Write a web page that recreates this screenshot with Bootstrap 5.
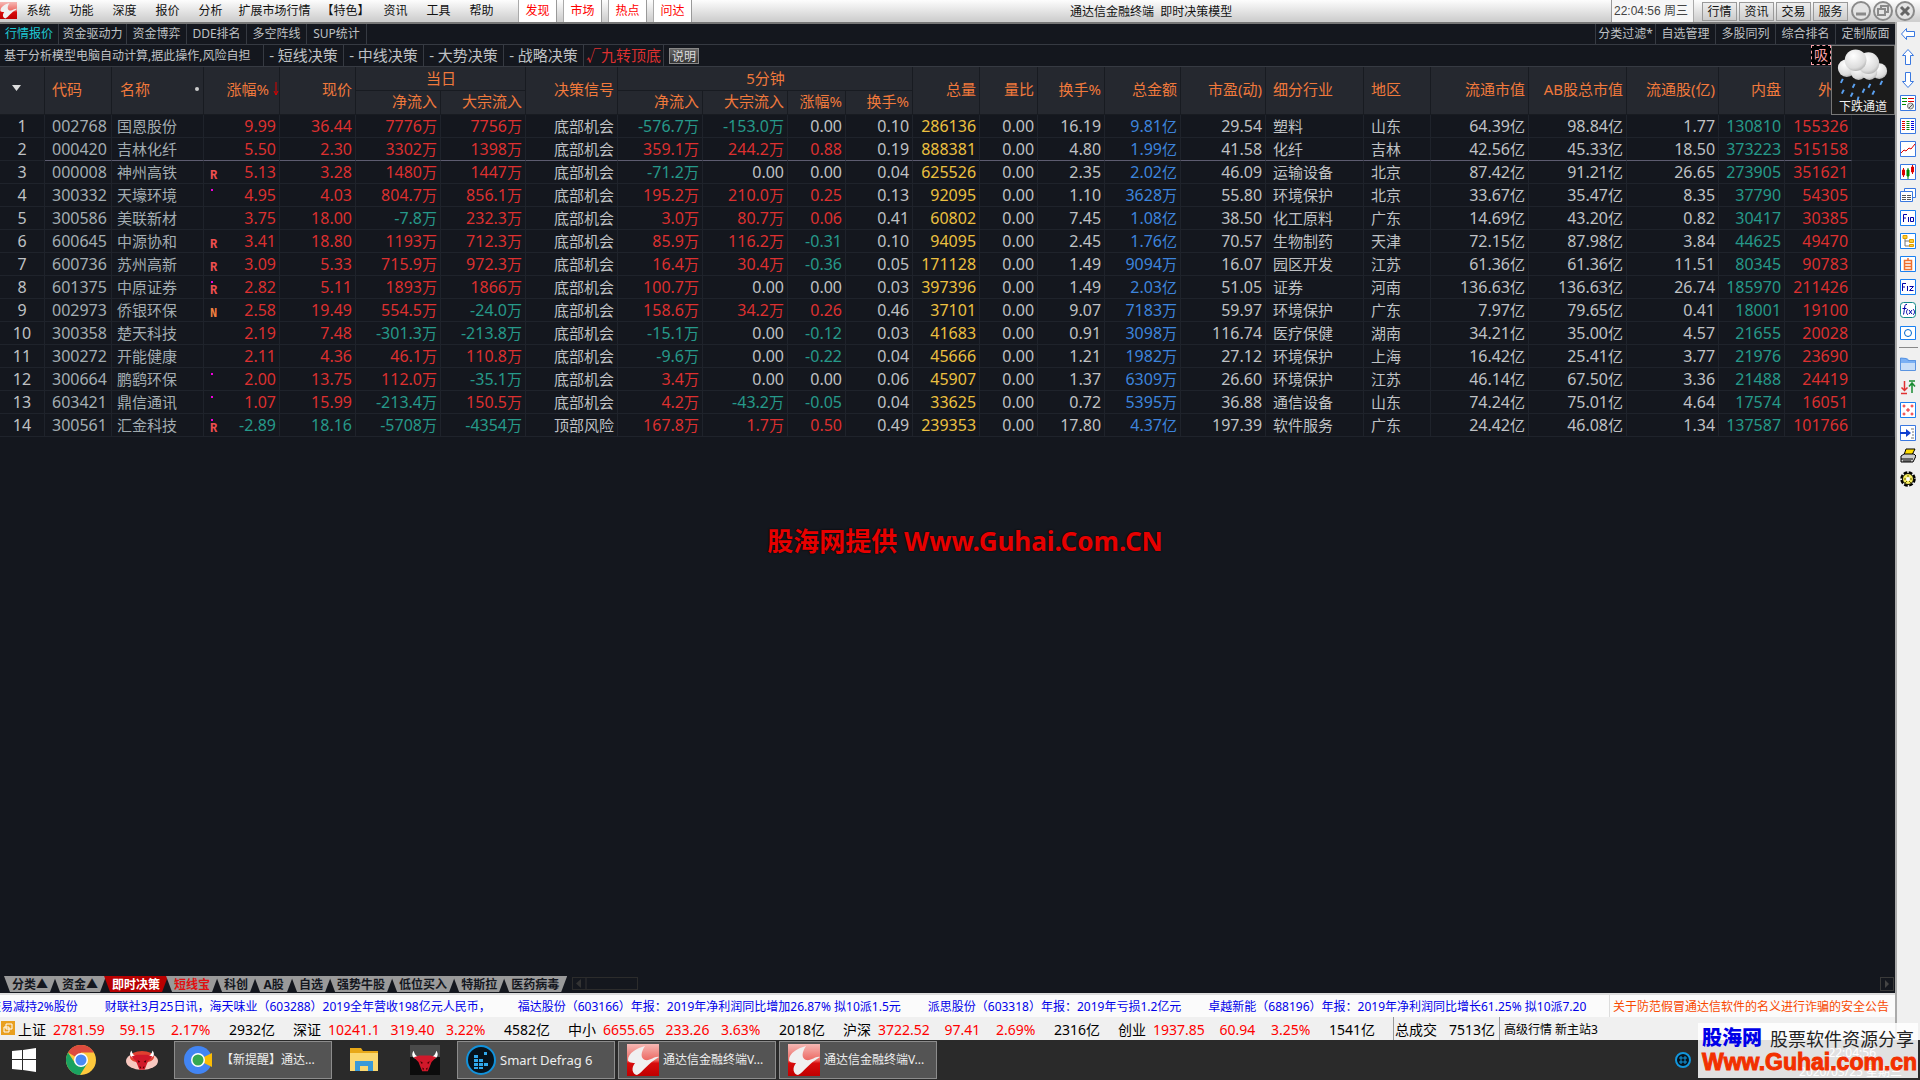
<!DOCTYPE html>
<html lang="zh-CN" data-bs-theme="dark">
<head>
<meta charset="utf-8">
<meta name="viewport" content="width=device-width, initial-scale=1">
<title>通达信金融终端 即时决策模型</title>
<link href="https://cdn.jsdelivr.net/npm/bootstrap@5.3.0/dist/css/bootstrap.min.css" rel="stylesheet">
<style>
  :root { --ink:#14171e; --line:#1f232b; --edge:#363a42; --head:#25282f; --or:#f0793c; --txt:#bfc1c4; }
  body { font-family:"Noto Sans","Noto Sans CJK SC",sans-serif; font-size:12px; line-height:18px; background:var(--ink); color:var(--txt); height:100vh; overflow:hidden; }
  button { font-family:inherit; border:0; background:none; color:inherit; padding:0; line-height:inherit; white-space:nowrap; }
  a { color:inherit; text-decoration:none; }
  svg { display:block; flex:none; }
  /* menu bar */
  .menubar { height:24px; background:linear-gradient(#fdfdfd,#cfcfcf 92%); border-bottom:2px solid #777; color:#111; }
  .menubar .mi { width:43px; text-align:center; white-space:nowrap; height:22px; line-height:22px; }
  .menubar .mi-l { width:85px; } .menubar .mi-m { width:57px; }
  .logo { margin-top:2px; }
  .hot { width:38px; height:22px; margin-right:7px; background:#fff; color:#f00; border-right:1px solid #999; box-shadow:-1px 0 0 #aaa; }
  .apptitle { left:1070px; top:0; line-height:23px; white-space:pre; }
  .clock { width:83px; background:#f6f6f6; border-left:1px solid #999; border-right:1px solid #aaa; color:#444; font:12px/23px "Liberation Sans","Noto Sans CJK SC",sans-serif; height:22px; padding-left:2px; margin-right:8px; white-space:nowrap; }
  .sysb { width:35px; height:19px; margin:2px 2px 0 0; border:1px solid #999; background:linear-gradient(#eee,#ccc); line-height:16px; }
  .winb { width:22px; height:22px; }
  /* tab rows */
  .tabrow { height:21px; border-bottom:1px solid var(--edge); }
  .tabrow button { width:60px; border-right:1px solid var(--edge); line-height:20px; }
  .tabrow .rt button { border-right:0; border-left:1px solid var(--edge); }
  .tabrow .on { color:#1fc8d4; width:59px; }
  .tabrow .wd { width:68px; }
  .modelrow { height:22px; border-bottom:1px solid var(--edge); }
  .modelrow .note { width:264px; padding-left:4px; border-right:1px solid var(--edge); line-height:21px; white-space:nowrap; }
  .modelrow .mb { width:80px; font-size:15px; line-height:19px; border-right:1px solid var(--edge); }
  .modelrow .help { width:30px; height:16px; margin:3px 0 0 5px; border:1px solid #888; background:linear-gradient(#666,#333); line-height:13px; color:#ddd; }
  /* quote grid */
  .quote { table-layout:fixed; width:100%; border-collapse:separate; border-spacing:0; font-size:16px; line-height:20px; }
  .quote th { background:var(--head); color:var(--or); font-weight:400; font-size:15px; line-height:18px; border-right:1px solid #181b21; border-bottom:1px solid #181b21; text-align:right; padding:0 3px 4px 4px; white-space:nowrap; overflow:hidden; vertical-align:middle; }
  .quote th.text-center { padding-bottom:2px; }
  .quote thead tr { height:24px; }
  .quote td { height:23px; padding:0 3px 1px 0; border-right:1px solid var(--line); border-bottom:1px solid var(--line); text-align:right; white-space:nowrap; line-height:20px; }
  .quote .l { text-align:left; padding-left:7px; }
  .quote .nm { padding-left:5px; }
  .quote .c { text-align:center; padding:0 0 1px; }
  .quote td.cj, .cj { font-size:15px; }
  .quote .pick td:not(:first-child):not(:last-child) { border-bottom-color:#5d5c70; }
  .quote tbody td.code, .quote tbody td.nm { color:#a3adb2; }
  .up { color:#dc3030; } .dn { color:#26998a; } .vol { color:#ecc040; } .amt { color:#3d84dc; }
  .flag { position:absolute; left:6px; top:9px; font:bold 12px/12px "Liberation Mono",monospace; color:#f05050; }
  .flag.n { color:#f08040; }
  .pip { position:absolute; left:7px; top:5px; width:2px; height:2px; background:#e0d; }
  .sortdot { width:4px; height:4px; border-radius:50%; background:#ccc; margin-right:1px; }
  .weather { right:0; top:21px; width:64px; height:70px; background:#1b1b1b; border:1px solid #777; color:#eee; z-index:3; }
  .xi { right:64px; top:21px; width:20px; height:20px; border:1px dashed #f9a0a8; background:#000; color:#f9a0a8; font-size:14px; line-height:18px; text-align:center; z-index:2; }
  .siteword { top:500px; left:0; right:0; padding-left:35px; text-align:center; font-size:26px; line-height:34px; font-weight:700; color:#e60000; text-shadow:0 0 2px #000; }
  /* tool strip */
  .strip { width:25px; background:#f0f0f0; border-left:2px solid #aaa; margin-top:-2px; z-index:4; }
  .strip button { height:23px; width:22px; display:flex; align-items:center; justify-content:center; }
  .strip hr { margin:3px 2px 4px; border-top:1px solid #888; opacity:1; }
  /* sheets */
  .sheets { height:17px; padding-left:4px; font-weight:700; }
  .sheets button { height:16px; min-width:39px; line-height:15px; padding:0 8px; margin-right:-2px; background:#9a9a9a; color:#14171e; font-weight:700; clip-path:polygon(0 0,100% 0,calc(100% - 6px) 100%,6px 100%); }
  .sheets .act { background:#b80000; color:#fff; } .sheets .hotx { color:#e01010; }
  .hbar { width:66px; height:13px; border:1px solid #2c2c2c; margin:1px 0 0 7px; }
  .hend { width:14px; height:14px; border:1px solid #3a3a3a; margin:1px 1px 0 0; }
  /* ticker + indices */
  .ticker { height:24px; background:#fbfbfb; border-top:2px solid #ddd; color:#0000e8; line-height:23px; white-space:nowrap; }
  .ticker .news { margin-left:-11px; gap:27px; }
  .ticker .notice { color:#f84800; width:286px; padding-left:3px; border-left:1px solid #ddd; }
  .indices { height:23px; background:#f0f0f0; color:#000; font-size:14px; line-height:25px; white-space:nowrap; }
  .coin { width:18px; }
  .ig { display:grid; grid-template-columns:35px 51px 67px 58px 64px; }
  .ig b, .ig span { font-weight:400; } .rd { color:#f00; }
  .tot { border-left:1px solid #999; border-right:1px solid #999; padding-left:1px; width:107px; }
  .srv { font-size:12px; }
  /* taskbar */
  .taskbar { height:40px; background:#2a2a2a; color:#eee; }
  .task { width:158px; height:38px; margin:1px 3px 0 0; padding-left:8px; display:flex; align-items:center; background:#545454; border:1px solid #8c8c8c; line-height:18px; }
  .launch { display:flex; align-items:center; justify-content:center; height:40px; }
  .w-start { width:48px; } .w-chrome { width:66px; } .w-bull { width:56px; margin-right:4px; } .w-files { width:58px; } .w-ox { width:64px; }
  .tray { padding-right:228px; }
  .sd { font-size:13px; }
  .brand { right:2px; bottom:2px; width:220px; height:55px; background:rgba(255,255,255,.86); z-index:9; }
  .brand .b1 { font-size:20px; line-height:22px; font-weight:900; color:#0000e8; }
  .brand .b2 { font-size:18px; line-height:22px; color:#222; font-family:"Noto Sans CJK SC",sans-serif; }
  .brand .b3 { font:bold 23px/26px "Liberation Sans",sans-serif; color:#f23000; -webkit-text-stroke:1px #f23000; }
  .ghost { color:#fff; font-size:12px; line-height:19px; white-space:nowrap; }
  .ghost .g1 { margin-top:-8px; padding-right:26px; }
</style>
<script src="https://cdn.jsdelivr.net/npm/bootstrap@5.3.0/dist/js/bootstrap.bundle.min.js"></script>
</head>
<body class="d-flex flex-column">
<svg width="0" height="0" class="position-absolute">
  <defs>
    <linearGradient id="gr" x1="0" y1="0" x2="0" y2="1"><stop offset="0" stop-color="#f6b8b4"/><stop offset=".5" stop-color="#ec6a64"/><stop offset=".6" stop-color="#d80c0c"/><stop offset="1" stop-color="#c00000"/></linearGradient>
    <radialGradient id="cl" cx=".4" cy=".3" r=".8"><stop offset="0" stop-color="#fff"/><stop offset=".7" stop-color="#dcdcdc"/><stop offset="1" stop-color="#a0a0a0"/></radialGradient>
    <symbol id="tdx" viewBox="0 0 32 32"><path fill="url(#gr)" d="M0 0h32v32H0z"/><path fill="#f0f0f0" d="M18 2C10 4 1 9 1 16c0 2 3 3 7 3-4 5-3 11 2 12 6-3 10-11 22-18-5-1-8 4-14 3-5-2-4-8 0-14z"/></symbol>
    <symbol id="bull" viewBox="0 0 32 24"><path fill="#fff" d="M4 1C0 6 4 11 11 10l1-2C8 8 5 6 4 1zM28 1c4 5 0 10-7 9l-1-2c4 0 7-2 8-7z"/><path fill="#d0182a" d="M10 6h12l6 2-5 5-2 5-2 5h-6l-2-5-2-5-5-5z"/><path fill="#400" d="M11 12l3 2-2 1zM21 12l-3 2 2 1zM13 19l2 1-1 2zM19 19l-2 1 1 2z"/></symbol>
  </defs>
</svg>

<header class="menubar d-flex position-relative flex-shrink-0">
  <svg width="17" height="17" class="logo"><use href="#tdx" width="17" height="17"/></svg>
  <nav class="d-flex">
    <a class="mi" href="#">系统</a><a class="mi" href="#">功能</a><a class="mi" href="#">深度</a><a class="mi" href="#">报价</a><a class="mi" href="#">分析</a><a class="mi mi-l" href="#">扩展市场行情</a><a class="mi mi-m" href="#">【特色】</a><a class="mi" href="#">资讯</a><a class="mi" href="#">工具</a><a class="mi" href="#">帮助</a>
  </nav>
  <div class="d-flex ms-3"><button class="hot">发现</button><button class="hot">市场</button><button class="hot">热点</button><button class="hot">问达</button></div>
  <div class="apptitle position-absolute">通达信金融终端  即时决策模型</div>
  <div class="d-flex ms-auto">
    <div class="clock">22:04:56 周三</div>
    <button class="sysb">行情</button><button class="sysb">资讯</button><button class="sysb">交易</button><button class="sysb">服务</button>
    <button class="winb" aria-label="最小化"><svg width="22" height="22" fill="none" stroke="#8a8a8a" stroke-width="2"><circle cx="11" cy="11" r="9" fill="#e4e4e4"/><path d="M6 14h10" stroke-width="3"/></svg></button>
    <button class="winb" aria-label="还原"><svg width="22" height="22" fill="none" stroke="#8a8a8a" stroke-width="2"><circle cx="11" cy="11" r="9" fill="#e4e4e4"/><path d="M9 9V6h7v6h-3M6 9h7v6H6z"/></svg></button>
    <button class="winb me-1" aria-label="关闭"><svg width="22" height="22" fill="none" stroke="#8a8a8a" stroke-width="2"><circle cx="11" cy="11" r="9" fill="#e4e4e4"/><path d="M7 7l8 8M15 7l-8 8" stroke="#666" stroke-width="3"/></svg></button>
  </div>
</header>

<div class="d-flex flex-grow-1" style="min-height:0">
  <main class="flex-grow-1 d-flex flex-column position-relative" style="min-width:0">
    <div class="tabrow d-flex justify-content-between flex-shrink-0">
      <div class="d-flex"><button class="on">行情报价</button><button class="wd">资金驱动力</button><button>资金博弈</button><button>DDE排名</button><button>多空阵线</button><button>SUP统计</button></div>
      <div class="d-flex rt"><button>分类过滤*</button><button>自选管理</button><button>多股同列</button><button>综合排名</button><button>定制版面</button></div>
    </div>
    <div class="modelrow d-flex flex-shrink-0">
      <div class="note">基于分析模型电脑自动计算,据此操作,风险自担</div>
      <button class="mb">- 短线决策</button><button class="mb">- 中线决策</button><button class="mb">- 大势决策</button><button class="mb">- 战略决策</button><button class="mb up">√九转顶底</button>
      <button class="help">说明</button>
    </div>
    <div class="xi position-absolute">吸</div>
    <div class="weather position-absolute text-center">
      <svg width="62" height="55" viewBox="0 0 63 55"><g fill="url(#cl)"><circle cx="15" cy="22" r="9"/><circle cx="48" cy="25" r="8"/><circle cx="27" cy="26" r="8"/><circle cx="38" cy="26" r="8"/><circle cx="37" cy="17" r="11"/><circle cx="24" cy="14" r="11"/></g><g stroke="#5aa0f0" stroke-width="2"><path d="M11 33l-2 4M23 38l-2 4M39 38l-2 4M51 35l-2 4M12 44l-2 4M21 47l-2 4M33 43l-2 4M43 45l-2 4M27 51l-1 4"/></g></svg>
      <div class="lh-1">下跌通道</div>
    </div>
    <table class="quote" id="quote">
      <colgroup id="cols"></colgroup>
      <thead>
        <tr><th rowspan="2"><svg width="9" height="7" class="ms-2"><path d="M0 0h9L4.500 6z" fill="#ddd"/></svg></th><th rowspan="2" class="l">代码</th><th rowspan="2"><div class="d-flex align-items-center justify-content-between ps-1">名称<i class="sortdot"></i></div></th><th rowspan="2" class="pe-0"><div class="d-flex align-items-center justify-content-end">涨幅%<svg width="6" height="14" class="ms-1"><path d="M3 0v13M1 9l2 4 2-4" fill="none" stroke="#d00"/></svg></div></th><th rowspan="2">现价</th><th colspan="2" class="text-center">当日</th><th rowspan="2">决策信号</th><th colspan="4" class="text-center">5分钟</th><th rowspan="2">总量</th><th rowspan="2">量比</th><th rowspan="2">换手%</th><th rowspan="2">总金额</th><th rowspan="2">市盈(动)</th><th rowspan="2" class="l">细分行业</th><th rowspan="2" class="l">地区</th><th rowspan="2">流通市值</th><th rowspan="2">AB股总市值</th><th rowspan="2">流通股(亿)</th><th rowspan="2">内盘</th><th rowspan="2">外盘</th><th rowspan="2"></th></tr>
        <tr><th>净流入</th><th>大宗流入</th><th>净流入</th><th>大宗流入</th><th>涨幅%</th><th>换手%</th></tr>
      </thead>
      <tbody id="rows"></tbody>
    </table>
    <div class="siteword position-absolute">股海网提供 Www.Guhai.Com.CN</div>
    <div class="sheets d-flex mt-auto flex-shrink-0">
      <button>分类▲</button><button>资金▲</button><button class="act">即时决策</button><button class="hotx">短线宝</button><button>科创</button><button>A股</button><button>自选</button><button>强势牛股</button><button>低位买入</button><button>特斯拉</button><button>医药病毒</button>
      <div class="hbar"><svg width="14" height="11"><path d="M8 1v9L3 5.500z" fill="#333"/><path d="M13 0v11" stroke="#333"/></svg></div>
      <div class="hend ms-auto"><svg width="12" height="12"><path d="M4 2v8l4-4z" fill="#444"/></svg></div>
    </div>
    <div class="ticker d-flex justify-content-between overflow-hidden flex-shrink-0">
      <div class="news d-flex"><span>交易减持2%股份</span><span>财联社3月25日讯，海天味业（603288）2019全年营收198亿元人民币，</span><span>福达股份（603166）年报：2019年净利润同比增加26.87% 拟10派1.5元</span><span>派思股份（603318）年报：2019年亏损1.2亿元</span><span>卓越新能（688196）年报：2019年净利润同比增长61.25% 拟10派7.20</span></div>
      <a class="notice" href="#">关于防范假冒通达信软件的名义进行诈骗的安全公告</a>
    </div>
    <div class="indices d-flex flex-shrink-0">
      <svg height="16" class="coin mt-1"><path d="M1 0h14v14H1z" fill="#e9a020"/><path d="M6 3h6v5H6zM4 6h5v5H4z" fill="none" stroke="#fff"/></svg>
      <div class="d-flex" id="idx"></div>
      <div class="tot d-flex justify-content-between"><span>总成交</span><span class="pe-1">7513亿</span></div>
      <span class="srv ps-1">高级行情 新主站3</span>
    </div>
  </main>

  <aside class="strip d-flex flex-column flex-shrink-0">
    <button aria-label="后退"><svg width="16" height="16" fill="#fff" stroke="#3a78e0"><path d="M1.500 8l5-5.500v3h8v5h-8v3z"/></svg></button>
    <button aria-label="上移"><svg width="16" height="16" fill="#fff" stroke="#3a78e0"><path d="M8 .5l5.500 6h-3v9h-5v-9h-3z"/></svg></button>
    <button aria-label="下移"><svg width="16" height="16" fill="#fff" stroke="#3a78e0"><path d="M8 15.500l5.500-6h-3v-9h-5v9h-3z"/></svg></button>
    <button aria-label="报价"><svg width="16" height="16"><path d="M.5.500h15v15H.5z" fill="#fff" stroke="#3a78e0"/><path d="M2 3.500h5M2 6.500h5M2 9.500h4" stroke="#080"/><path d="M8 3.500h6M8 6.500h6" stroke="#d00"/><circle cx="10.500" cy="11" r="3" fill="#ddd" stroke="#777"/><path d="M9 13l4-4" stroke="#555"/></svg></button>
    <button aria-label="列表"><svg width="16" height="16"><path d="M.5.500h15v15H.5z" fill="#fff" stroke="#3a78e0"/><path d="M2 3.500h3M2 5.500h3M2 7.500h3M2 9.500h3M2 11.500h3" stroke="#d00"/><path d="M6.500 3.500h3M6.500 5.500h3M6.500 7.500h3M6.500 9.500h3M6.500 11.500h3" stroke="#080"/><path d="M11 3.500h3M11 5.500h3M11 7.500h3M11 9.500h3M11 11.500h3" stroke="#00d"/></svg></button>
    <button aria-label="分时"><svg width="16" height="16"><path d="M.5.500h15v15H.5z" fill="#fff" stroke="#3a78e0"/><path d="M1 12l3-3 2 1 3-3 2 1 4-5" fill="none" stroke="#d00"/></svg></button>
    <button aria-label="K线"><svg width="16" height="16"><path d="M.5.500h15v15H.5z" fill="#fff" stroke="#3a78e0"/><path d="M2.500 6h2v5h-2zM11.500 3h2v5h-2zM3.500 4v9M12.500 1v9" fill="#d00" stroke="#d00"/><path d="M7 6h2v6H7zM8 4v11" fill="#080" stroke="#080"/></svg></button>
    <button aria-label="窗口"><svg width="16" height="16" fill="#fff" stroke="#3a78e0"><path d="M4.500 1.500h11v9h-11z"/><path d="M.5 4.500h12v10H.5z"/><path d="M2 8.500h4M2 10.500h4M2 12.500h4M7 8.500h4M7 10.500h4M7 12.500h4" stroke="#555"/></svg></button>
    <button aria-label="F10"><svg width="16" height="16" fill="#fff" stroke="#1a80f0"><path d="M.5.500h15v15H.5z"/><path d="M3.500 12V4.500H7M3.500 8H6M8.500 7v5M10.500 7.500h3v4h-3z" stroke="#00a" fill="none"/></svg></button>
    <button aria-label="树"><svg width="16" height="16" fill="#fff" stroke="#1a80f0"><path d="M.5.500h15v15H.5z"/><path d="M5 5v8h5M5 8h5" fill="none" stroke="#777"/><path d="M3 2.500h4v3H3zM9.500 6.500h4v3h-4zM9.500 11.500h4v2h-4z" fill="#fc3" stroke="#e0a000"/></svg></button>
    <button aria-label="自选"><svg width="16" height="16" fill="#fff" stroke="#1a80f0"><path d="M.5.500h15v15H.5z"/><path d="M4.500 4.500h7v9h-7zM4 7.500h8M4 10.500h8M8 2v2" stroke="#f07030" stroke-width="1.500" fill="none"/></svg></button>
    <button aria-label="F12"><svg width="16" height="16" fill="#fff" stroke="#1a80f0"><path d="M.5.500h15v15H.5z"/><path d="M2.500 12V4.500H6M2.500 8H5M7.500 7v5M9.500 7.500h4l-4 4h4" stroke="#00a" fill="none"/></svg></button>
    <button aria-label="公式"><svg width="16" height="16"><rect x=".5" y=".5" width="15" height="15" rx="3" fill="#fff" stroke="#188"/><path d="M7 2.500c-3-1-2 4-3.500 10M2.500 6.500h4M8 7c-2 2-2 4 0 6M13 7c2 2 2 4 0 6M9 8l3 4M12 8l-3 4" stroke="#00a" fill="none"/></svg></button>
    <button aria-label="圆"><svg width="16" height="16" fill="#fff" stroke="#1a80f0"><path d="M.5 1.500h15v13H.5z"/><circle cx="8" cy="8" r="3.500" stroke="#06c"/></svg></button>
    <hr>
    <button aria-label="文件夹"><svg width="16" height="16"><path d="M1 2h6l2 2h7v10H1z" fill="#7ab0f4"/><path d="M1 7h15v7H1z" fill="#c8def8"/><path d="M.5 2v12.500h15V4.500H8l-2-2z" fill="none" stroke="#5a94e0"/></svg></button>
    <button aria-label="排序"><svg width="16" height="16" fill="none" stroke-width="1.500"><path d="M4.500 2v9M1.500 8.500l3 3 3-3M1 14.500h6" stroke="#e03030"/><path d="M12 14V5M9 7.500l3-3.500 3 3.500M9 2h6" stroke="#188a30"/></svg></button>
    <button aria-label="十字"><svg width="16" height="16" fill="#fff" stroke="#1a80f0"><path d="M.5.500h15v15H.5z"/><path d="M6 8h4M8 6v4M2.500 4h3M4 2.500v3M10.500 4h3M12 2.500v3M2.500 12h3M4 10.500v3M10.500 12h3M12 10.500v3" stroke="#e22"/></svg></button>
    <button aria-label="跳转"><svg width="16" height="16"><path d="M.5.500h15v15H.5z" fill="#fff" stroke="#3a78e0"/><path d="M0 7h6V4l5 4-5 4V9H0z" fill="#1040d0"/><path d="M11 4h3M12 7h2M12 10h2M11 13h3" stroke="#777"/></svg></button>
    <button aria-label="打印"><svg width="16" height="16"><path d="M6 1h9l-3 6H4z" fill="#fd0" stroke="#000"/><path d="M1 8l3-2h10l2 2-3 6H1z" fill="#ccc" stroke="#000"/><path d="M1 11h12M3 13h8" stroke="#000"/></svg></button>
    <button aria-label="设置"><svg width="16" height="16"><circle cx="8" cy="8" r="6.500" fill="none" stroke="#000" stroke-width="2.500" stroke-dasharray="3.600 1.500"/><circle cx="8" cy="8" r="5.500" fill="#f4ec60" stroke="#000"/><path d="M8 4v3M4 8h3M9 8h3M5 12l2-2M11 12l-2-2" stroke="#665c00"/><circle cx="8" cy="8" r="2" fill="#fff"/></svg></button>
  </aside>
</div>

<footer class="taskbar d-flex position-relative flex-shrink-0">
  <button class="launch w-start" aria-label="开始"><svg width="24" height="24" fill="#fff"><path d="M0 3l10-1v9H0zM11 2l13-2v11H11zM0 12h10v10L0 21zM11 12h13v12l-13-2z"/></svg></button>
  <button class="launch w-chrome" aria-label="Chrome"><svg width="30" height="30" viewBox="0 0 30 30"><circle cx="15" cy="15" r="15" fill="#fdc83c"/><path d="M15 15L2 7.500A15 15 0 0 1 28 7.500H15z" fill="#dd4b3e"/><path d="M2 7.500A15 15 0 0 0 14 30l7.500-12L15 15l-6 3z" fill="#1aa260"/><circle cx="15" cy="15" r="7" fill="#fff"/><circle cx="15" cy="15" r="5.500" fill="#4a8af4"/></svg></button>
  <button class="launch w-bull" aria-label="牛"><svg width="34" height="24" viewBox="0 0 34 24"><ellipse cx="17" cy="13" rx="16" ry="9" fill="#f8c8c0"/><ellipse cx="17" cy="9" rx="12" ry="6" fill="#e04030"/><use href="#bull" x="3" y="1" width="28" height="22"/></svg></button>
  <button class="task"><svg width="30" height="30" class="me-2"><circle cx="15" cy="15" r="14" fill="#4285f4"/><path d="M15 15l14-7v14z" fill="#fbbc05"/><circle cx="15" cy="15" r="7" fill="#fff"/><circle cx="15" cy="15" r="5.500" fill="#34a853"/></svg>【新提醒】通达...</button>
  <button class="launch w-files" aria-label="资源管理器"><svg width="28" height="24"><path d="M0 0h11l2 3h15v20H0z" fill="#e8a818"/><path d="M0 5h28v18H0z" fill="#fbd870"/><path d="M5 23V13h18v10h-5v-5h-8v5z" fill="#3a9ad8"/></svg></button>
  <button class="launch w-ox" aria-label="牛市"><svg width="30" height="30"><path d="M0 0h30v30H0z" fill="#0c0c0c"/><path d="M0 0h30v12H0z" fill="#4a4a4a"/><use href="#bull" x="0" y="4" width="30" height="24"/></svg></button>
  <button class="task sd"><svg width="30" height="30" class="me-1"><circle cx="15" cy="15" r="14" fill="#06121c" stroke="#1292dc" stroke-width="2"/><path d="M8 10h4v3H8zM8 14h4v3H8zM13 14h4v3h-4zM8 18h4v3H8zM13 18h4v3h-4zM18 18h4v3h-4zM8 22h4v2H8zM13 22h4v2h-4zM18 7h3v3h-3z" fill="#30a8ec"/></svg>Smart Defrag 6</button>
  <button class="task"><svg width="32" height="32" class="me-1"><use href="#tdx"/></svg>通达信金融终端V...</button>
  <button class="task"><svg width="32" height="32" class="me-1"><use href="#tdx"/></svg>通达信金融终端V...</button>
  <div class="launch tray ms-auto"><svg width="18" height="18" fill="none" stroke="#1296dc" stroke-width="2"><circle cx="9" cy="9" r="7" fill="#06121c"/><path d="M6 6h2v2H6zM10 6h2v2h-2zM6 10h2v2H6zM10 10h2v2h-2z" stroke-width="1"/></svg></div>
</footer>

<div class="brand position-absolute">
  <div class="ghost position-absolute end-0 top-50 pe-3 text-end"><div class="g1">22:04:56</div>2020/03/25 星期三</div>
  <div class="position-relative d-flex justify-content-between px-1 pt-1"><span class="b1">股海网</span><span class="b2">股票软件资源分享</span></div>
  <div class="b3 position-relative ps-1">Www.Guhai.com.cn</div>
</div>

<script>
const widths = [45,67,92,76,76,85,85,92,85,85,58,67,67,58,67,76,85,98,67,98,98,92,66,67];
document.getElementById('cols').innerHTML = widths.map(w => `<col style="width:${w}px">`).join('') + '<col>';
// 代码 名称 标记 涨幅 现价 净流入 大宗 信号 | 5分钟×4 | 总量 换手 总金额 市盈 行业 地区 流通市值 总市值 流通股 内盘 外盘
const data = `002768 国恩股份 _ 9.99 36.44 7776万 7756万 底部机会 -576.7万 -153.0万 0.00 0.10 286136 16.19 9.81亿 29.54 塑料 山东 64.39亿 98.84亿 1.77 130810 155326
000420 吉林化纤 _ 5.50 2.30 3302万 1398万 底部机会 359.1万 244.2万 0.88 0.19 888381 4.80 1.99亿 41.58 化纤 吉林 42.56亿 45.33亿 18.50 373223 515158
000008 神州高铁 R 5.13 3.28 1480万 1447万 底部机会 -71.2万 0.00 0.00 0.04 625526 2.35 2.02亿 46.09 运输设备 北京 87.42亿 91.21亿 26.65 273905 351621
300332 天壕环境 . 4.95 4.03 804.7万 856.1万 底部机会 195.2万 210.0万 0.25 0.13 92095 1.10 3628万 55.80 环境保护 北京 33.67亿 35.47亿 8.35 37790 54305
300586 美联新材 _ 3.75 18.00 -7.8万 232.3万 底部机会 3.0万 80.7万 0.06 0.41 60802 7.45 1.08亿 38.50 化工原料 广东 14.69亿 43.20亿 0.82 30417 30385
600645 中源协和 R 3.41 18.80 1193万 712.3万 底部机会 85.9万 116.2万 -0.31 0.10 94095 2.45 1.76亿 70.57 生物制药 天津 72.15亿 87.98亿 3.84 44625 49470
600736 苏州高新 R 3.09 5.33 715.9万 972.3万 底部机会 16.4万 30.4万 -0.36 0.05 171128 1.49 9094万 16.07 园区开发 江苏 61.36亿 61.36亿 11.51 80345 90783
601375 中原证券 .R 2.82 5.11 1893万 1866万 底部机会 100.7万 0.00 0.00 0.03 397396 1.49 2.03亿 51.05 证券 河南 136.63亿 136.63亿 26.74 185970 211426
002973 侨银环保 N 2.58 19.49 554.5万 -24.0万 底部机会 158.6万 34.2万 0.26 0.46 37101 9.07 7183万 59.97 环境保护 广东 7.97亿 79.65亿 0.41 18001 19100
300358 楚天科技 _ 2.19 7.48 -301.3万 -213.8万 底部机会 -15.1万 0.00 -0.12 0.03 41683 0.91 3098万 116.74 医疗保健 湖南 34.21亿 35.00亿 4.57 21655 20028
300272 开能健康 _ 2.11 4.36 46.1万 110.8万 底部机会 -9.6万 0.00 -0.22 0.04 45666 1.21 1982万 27.12 环境保护 上海 16.42亿 25.41亿 3.77 21976 23690
300664 鹏鹞环保 . 2.00 13.75 112.0万 -35.1万 底部机会 3.4万 0.00 0.00 0.06 45907 1.37 6309万 26.60 环境保护 江苏 46.14亿 67.50亿 3.36 21488 24419
603421 鼎信通讯 . 1.07 15.99 -213.4万 150.5万 底部机会 4.2万 -43.2万 -0.05 0.04 33625 0.72 5395万 36.88 通信设备 山东 74.24亿 75.01亿 4.64 17574 16051
300561 汇金科技 .R -2.89 18.16 -5708万 -4354万 顶部风险 167.8万 1.7万 0.50 0.49 239353 17.80 4.37亿 197.39 软件服务 广东 24.42亿 46.08亿 1.34 137587 101766`.split('\n').map(r => r.split(' '));
const unit = s => s.replace(/[万亿]/, '<span class="cj">$&</span>');
const tone = s => parseFloat(s) > 0 ? 'up' : parseFloat(s) < 0 ? 'dn' : '';
const td = (s, cls = '') => `<td class="${cls}">${unit(s)}</td>`;
document.getElementById('rows').innerHTML = data.map((r, i) => {
  const letter = r[2].match(/[RN]/);
  const mark = (r[2][0] === '.' ? '<i class="pip"></i>' : '') + (letter ? `<i class="flag ${letter[0] === 'N' ? 'n' : ''}">${letter[0]}</i>` : '');
  return `<tr class="${i === 1 ? 'pick' : ''}">` + td(String(i + 1), 'c') + td(r[0], 'l code') + td(r[1], 'l nm cj')
    + `<td class="${tone(r[3])} position-relative">${mark}${r[3]}</td>` + td(r[4], tone(r[3])) + td(r[5], tone(r[5])) + td(r[6], tone(r[6]))
    + td(r[7], 'cj') + td(r[8], tone(r[8])) + td(r[9], tone(r[9])) + td(r[10], tone(r[10])) + td(r[11]) + td(r[12], 'vol') + td('0.00')
    + td(r[13]) + td(r[14], 'amt') + td(r[15]) + td(r[16], 'l cj') + td(r[17], 'l cj') + td(r[18]) + td(r[19]) + td(r[20])
    + td(r[21], 'dn') + td(r[22], 'up') + '<td></td></tr>';
}).join('');
document.getElementById('idx').innerHTML = [
  ['上证','2781.59','59.15','2.17%','2932亿'],['深证','10241.1','319.40','3.22%','4582亿'],['中小','6655.65','233.26','3.63%','2018亿'],
  ['沪深','3722.52','97.41','2.69%','2316亿'],['创业','1937.85','60.94','3.25%','1541亿']
].map(g => `<div class="ig"><b>${g[0]}</b><span class="rd">${g[1]}</span><span class="rd text-center">${g[2]}</span><span class="rd">${g[3]}</span><span>${g[4]}</span></div>`).join('');
</script>
</body>
</html>
